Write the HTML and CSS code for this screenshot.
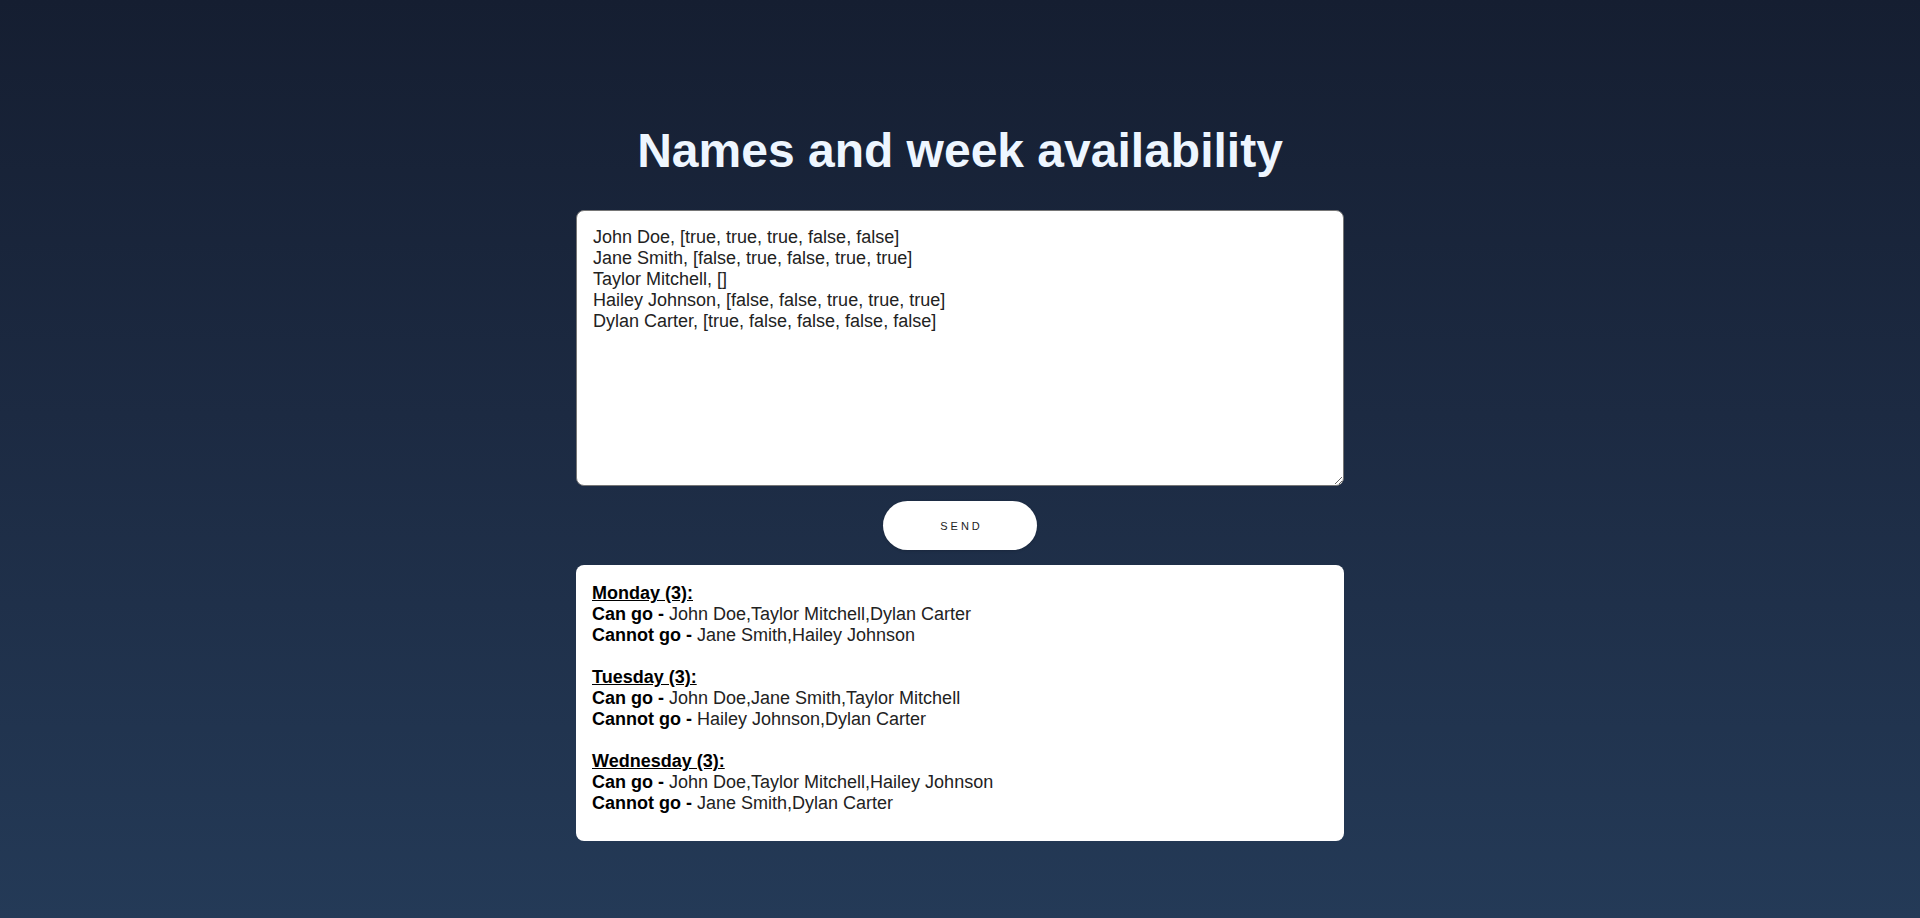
FILE: index.html
```html
<!DOCTYPE html>
<html lang="en">
<head>
<meta charset="utf-8">
<title>Names and week availability</title>
<link rel="stylesheet" href="styles.css">
</head>
<body>
<main class="page">
  <h1 class="title">Names and week availability</h1>
  <textarea class="input" spellcheck="false">John Doe, [true, true, true, false, false]
Jane Smith, [false, true, false, true, true]
Taylor Mitchell, []
Hailey Johnson, [false, false, true, true, true]
Dylan Carter, [true, false, false, false, false]</textarea>
  <button class="send" type="button">SEND</button>
  <section class="results">
    <div class="day">
      <div class="day-title">Monday (3):</div>
      <div><b>Can go - </b>John Doe,Taylor Mitchell,Dylan Carter</div>
      <div><b>Cannot go - </b>Jane Smith,Hailey Johnson</div>
    </div>
    <div class="day">
      <div class="day-title">Tuesday (3):</div>
      <div><b>Can go - </b>John Doe,Jane Smith,Taylor Mitchell</div>
      <div><b>Cannot go - </b>Hailey Johnson,Dylan Carter</div>
    </div>
    <div class="day">
      <div class="day-title">Wednesday (3):</div>
      <div><b>Can go - </b>John Doe,Taylor Mitchell,Hailey Johnson</div>
      <div><b>Cannot go - </b>Jane Smith,Dylan Carter</div>
    </div>
  </section>
</main>
</body>
</html>
```

FILE: styles.css
```css
html, body {
  margin: 0;
  padding: 0;
}

body {
  min-height: 100vh;
  background: linear-gradient(180deg, #151e31 0%, #1c2a42 45%, #243a57 100%);
  font-family: "Liberation Sans", Arial, sans-serif;
}

.page {
  width: 768px;
  margin: 0 auto;
  padding-top: 123px;
  display: flex;
  flex-direction: column;
  align-items: center;
}

.title {
  margin: 0 0 32px;
  font-size: 48px;
  font-weight: bold;
  line-height: normal;
  color: #eef6ff;
  text-align: center;
}

.input {
  box-sizing: border-box;
  width: 768px;
  height: 276px;
  margin: 0;
  padding: 16px;
  border: 1px solid #767676;
  border-radius: 8px;
  background: #fff;
  color: #222;
  font-family: "Liberation Sans", Arial, sans-serif;
  font-size: 18px;
  line-height: normal;
  resize: vertical;
  outline: none;
}

.send {
  box-sizing: border-box;
  width: 154px;
  height: 49px;
  margin: 15px 0;
  padding: 0 0 0 3px;
  border: none;
  border-radius: 25px;
  background: #fff;
  color: #222;
  font-family: "Liberation Sans", Arial, sans-serif;
  font-size: 11px;
  letter-spacing: 3px;
  box-shadow: 0 1px 3px rgba(0, 0, 0, 0.15);
  cursor: pointer;
}

.results {
  box-sizing: border-box;
  width: 768px;
  padding: 18px 16px 27px;
  border-radius: 8px;
  background: #fff;
  color: #222;
  font-size: 18px;
  line-height: 21px;
  display: flex;
  flex-direction: column;
  gap: 21px;
}

.results b {
  color: #000;
}

.day-title {
  font-weight: bold;
  color: #000;
  text-decoration: underline;
}
```
